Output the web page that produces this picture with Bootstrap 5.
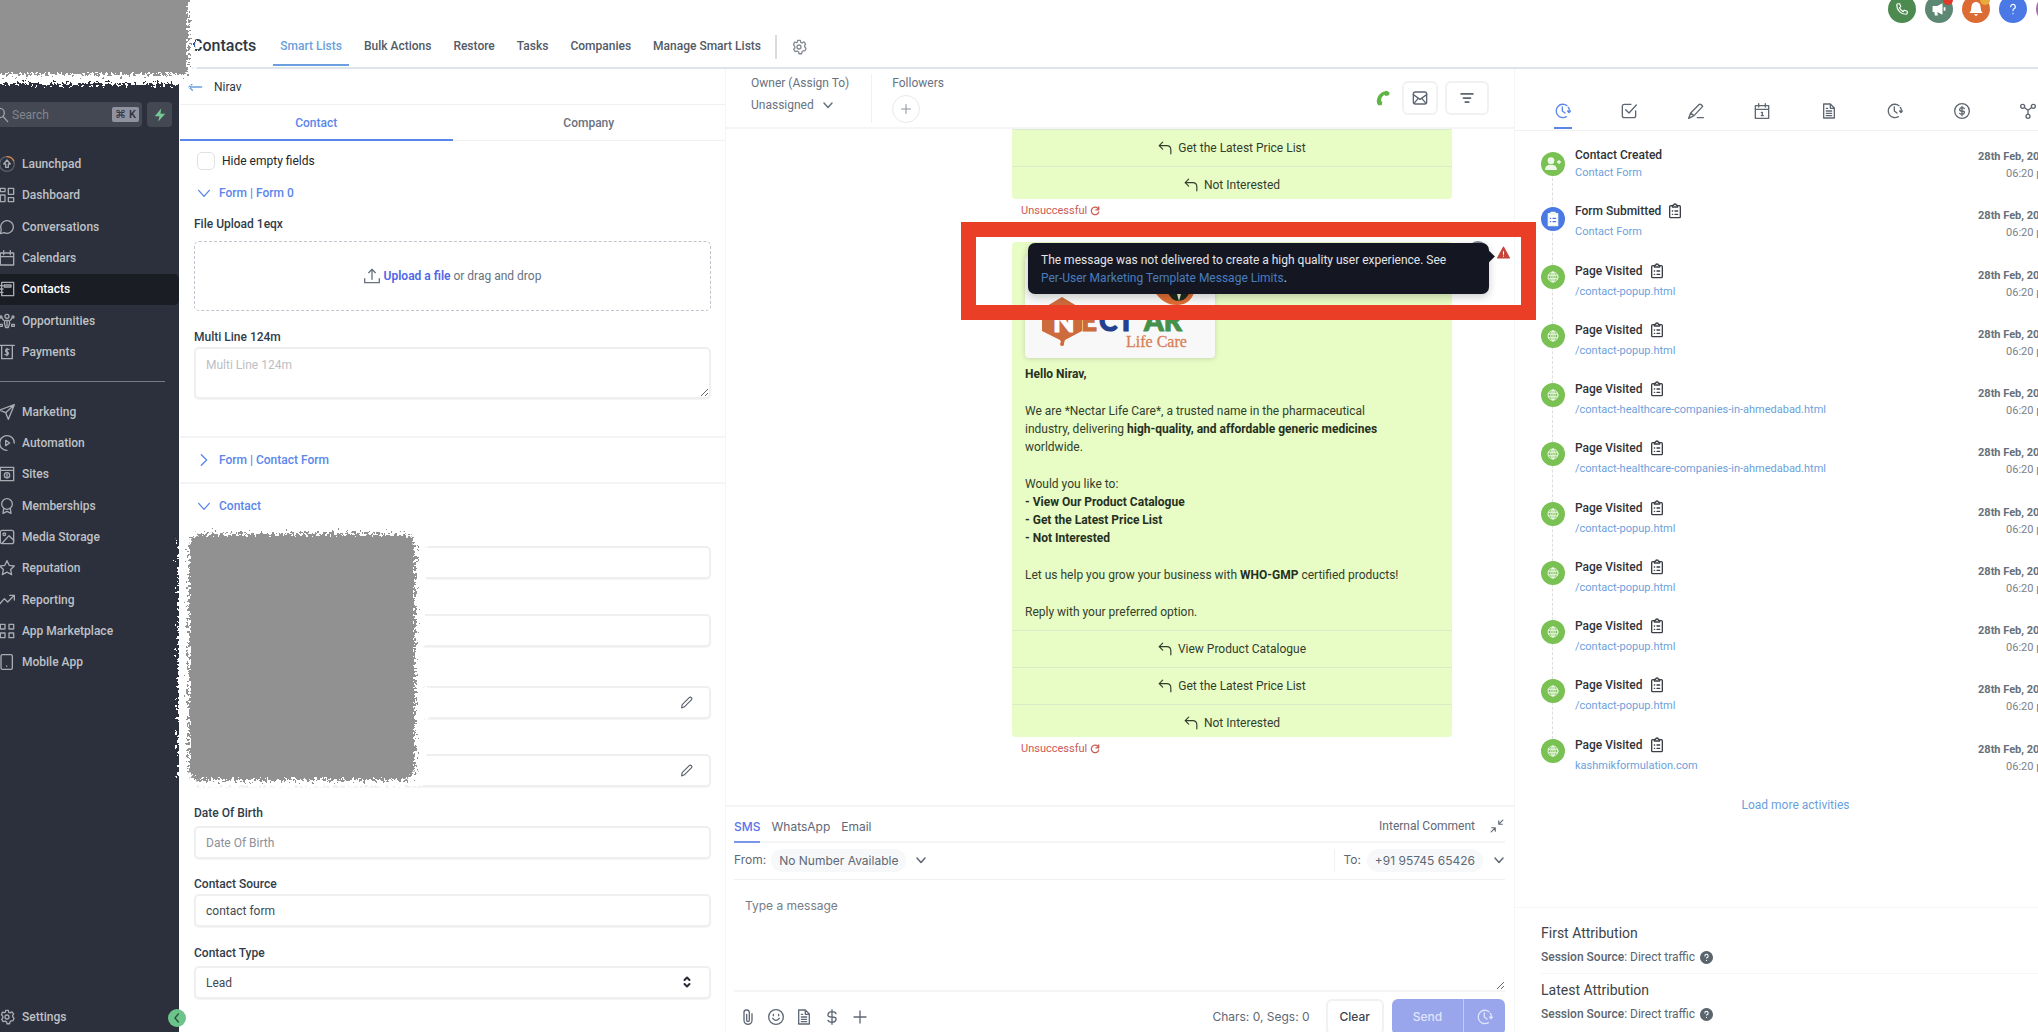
<!DOCTYPE html>
<html lang="en">
<head>
<meta charset="utf-8">
<meta name="viewport" content="width=device-width, initial-scale=1">
<title>Contacts</title>
<link href="https://cdn.jsdelivr.net/npm/bootstrap@5.3.0/dist/css/bootstrap.min.css" rel="stylesheet">
<style>
:root{--blue:#5a86ec;--sky:#6c9fdd;--ink:#2e3742;--muted:#68727f;--line:#f0f1f3;--lime:#e8fcc5;--alert:#ea3f26}
body{font-family:Roboto,"Liberation Sans",sans-serif;font-size:12px;line-height:18px;color:var(--ink);background:#fff;overflow:hidden}
a{text-decoration:none;color:inherit}
button{font:inherit;color:inherit;background:none;border:0;padding:0}
svg.ic{width:16px;height:16px;fill:none;stroke:currentColor;stroke-width:2;stroke-linecap:round;stroke-linejoin:round;flex:none}
svg.fillic{fill:currentColor;stroke:none}
svg.i12{width:12px;height:12px;stroke-width:3}
svg.i14{width:14px;height:14px}
.inter{font-family:Inter,"Liberation Sans",sans-serif}
.roboto{font-family:Roboto,"Liberation Sans",sans-serif}
.semi{font-weight:500}
/* side bar */
.side{width:179px;flex:none;background:#2b303c;color:#bfc1c6;padding-top:102px}
.searchbar{height:25px;margin:0 7px 21px 0;gap:5px}
.searchbox{background:#434853;border-radius:0 4px 4px 0;padding-right:3px}
.searchbox svg{margin-left:-7px;color:#a3a5ac}
.searchbox input{background:none;border:0;outline:0;color:#fff;padding:0 0 0 3px;width:10px}
.searchbox input::placeholder{color:#83868f}
.keys{background:#9092a0;color:#2b303c;border-radius:2px;padding:0 3px;font-size:11px;line-height:15px;white-space:nowrap;font-weight:500}
.bolt{width:25px;background:#434853;border-radius:4px;color:#74c893}
.menu1{height:220px;display:grid;grid-auto-rows:1fr}
.menu2{height:282px;display:grid;grid-auto-rows:1fr}
.side a{display:flex;align-items:center;gap:7px;font-weight:500;border-radius:0 5px 5px 0}
.side a svg{margin-left:-1px;color:#a9abb2}
.side a.on{background:#1a1d24;color:#fff}
.side hr{margin:13px 14px 14px 0;border-color:#8b8e95;opacity:.8}
.setlink{margin-bottom:6px}
.collapser{position:absolute;right:-7px;bottom:5px;width:18px;height:18px;background:#6dc48b;color:#20543a;z-index:3}
/* header */
.mainarea{min-width:0;margin-left:1px}
.topbar{height:69px;border-bottom:2px solid #dfe4e9;padding:0 0 1px 12px}
.topbar h1{font-size:16px;font-weight:500;line-height:18px;margin:0 17px 11px 0}
.topbar nav{gap:8px}
.topbar nav a{padding:2px 7px 0;line-height:36px;border-bottom:2px solid transparent;font-weight:500;color:#525a66}
.topbar nav a.on{color:var(--sky);border-color:var(--sky)}
.gearbox{border-left:2px solid #d8dbdf;margin:0 0 7px 7px;padding:4px 0 4px 14px;color:#868b91}
.rounds{gap:9px;margin:-5px -26px 0 0}
.rounds button{width:28px;height:28px;color:#fff;position:relative;flex:none}
.r-call{background:#4c8a50}.r-news{background:#5c8773}.r-bell{background:#dc6c34}.r-help{background:#4a78e4}.r-me{background:#a06ba8}
.dotmark{position:absolute;right:0;top:0;width:10px;height:10px;background:#e03a2c}
.dotmark.amber{background:#e8ac3c}
/* columns */
.board{display:grid;grid-template-columns:546fr 789fr 539fr;grid-template-rows:minmax(0,1fr);width:calc(100% + 16px)}
.pane{border-right:1px solid #f4f5f6;min-width:0}
.namebar{height:36px;border-bottom:1px solid var(--line);padding:0 7px;gap:11px}
.namebar svg{color:var(--sky)}
.twotabs a{line-height:36px;height:36px;border-bottom:1px solid var(--line);color:var(--muted);font-weight:500}
.twotabs a.on{color:var(--blue);border-bottom:2px solid var(--blue)}
.body1{padding:0 14px}
.hiderow{gap:7px;padding:11px 3px 0}
.body1 .form-check-input{width:18px;height:18px;margin:0;border:1px solid #dfe1e5;border-radius:5px}
.foldbtn{color:var(--blue);font-weight:500;gap:7px;padding-left:2px}
.fold0{margin:14px 0}
.foldmid{height:44px}
.fieldname{font-weight:500;line-height:16px;display:block;color:#303c49}
.dropzone{border:1px dashed #bfc3cb;border-radius:5px;height:70px;margin:9px 0 18px;color:var(--muted);width:100%}
.dropzone b{color:#4f66e8;font-weight:600}
.body1 .form-control,.body1 .form-select{font-size:12px;line-height:18px;border:2px solid #eeeff1;border-radius:5px;padding:5px 10px;height:33px;color:#424a54;box-shadow:0 1px 1px #f3f4f5}
.body1 .form-control::placeholder{color:#8b9099}
.body1 textarea.form-control{height:52px;padding-top:7px;margin-top:2px}
.body1 textarea.form-control::placeholder{color:#bcc0c5}
.body1 .form-select{background-image:none}
.rule{border-top:2px solid #f3f4f5;margin:0 -14px}
.rule1{margin-top:37px}
.fieldbox{position:relative}
.fieldbox svg{position:absolute;right:18px;top:10px;width:13px;height:13px;color:#555c66}
.fieldbox svg.caret{width:12px;height:12px;color:#262b35;stroke-width:4}
.hiddenset{display:grid;row-gap:35px;padding:18px 0}
.third{margin-top:4px}
.fl1{margin-bottom:5px}
.fl2{margin:17px 0 2px}
#src{margin-bottom:18px}
/* conversation */
.convhead{height:60px;border-bottom:2px solid #f4f5f6;padding:0 25px 0 25px;color:var(--muted)}
.owner{padding:5px 22px 0 0}
.convhead .sep{border-left:1px solid var(--line);margin:5px 0 4px;padding-left:20px}
.plus{width:28px;height:28px;border:1px solid #e8e9ec;color:#8c929b;margin-top:3px}
.plus svg.i12{stroke-width:2}
.convtools{gap:7px}
.callbtn{color:#5eb545}
.sqbtn{border:2px solid #f0f1f3;border-radius:6px;height:34px;color:#5d6673}
.filterbtn{padding:0 13px}
.msgcol{width:440px;margin-right:62px}
.msg2{margin-top:23px}
.bubble{background:var(--lime);border-radius:4px;color:#33402c}
.reply{display:flex;width:100%;justify-content:center;align-items:center;gap:6px;border-top:1px solid #dcebca;padding:10px 0;line-height:16px;color:#333d2e}
.reply svg.ic{width:14px;height:14px}
.reply:last-child{padding-bottom:6px}
.failed{color:#cb5a52;font-size:11px;line-height:16px;margin:4px 0 0 9px;gap:3px}
.failed svg.ic{width:10px;height:10px;stroke-width:3}
.bubble p{margin:0 0 19px}
.bubble strong{font-weight:700;color:#26301f}
.bubbletext{padding:14px 12px 9px 13px}
.logocard{display:block;width:190px;height:102px;background:#f8f8f8;border-radius:4px;box-shadow:0 1px 5px #c9d8b0;margin-bottom:7px}
.tip{position:absolute;left:16px;top:1px;width:461px;background:#141722;color:#e3e4e8;border-radius:7px;padding:8px 13px 7px;z-index:4;box-shadow:0 3px 8px rgba(0,0,0,.2)}
.tip a{color:#4a7dbd}
.tip::after{content:"";position:absolute;right:-4px;top:9px;width:9px;height:9px;background:#141722;transform:rotate(45deg)}
.avatar{position:absolute;left:456px;top:-1px;width:20px;height:20px;background:#7d8791}
.warn{position:absolute;left:485px;top:4px;color:#c4453c;display:flex}
.warn svg.ic{width:13px;height:13px}
.frame{position:absolute;left:-51px;top:-20px;width:575px;height:98px;border:15px solid var(--alert);z-index:6;pointer-events:none}
/* composer */
.composer{border-top:2px solid #f3f4f5;margin-bottom:-3px;padding:0 9px 0 8px;color:#5f6875}
.comptabs{height:36px;border-bottom:2px solid #f3f4f5;gap:11px}
.comptabs a{line-height:39px;height:36px}
.comptabs a.on{color:#5a72ea;border-bottom:2px solid #7b95ee;font-weight:500}
.comptabs button{padding:3px 1px 0 4px}
.fromrow{height:37px;border-bottom:1px solid var(--line);padding-bottom:2px;gap:5px}
.tobox{border-left:1px solid var(--line);padding-left:8px;gap:6px}
.pill{background:#f6f8fa;border-radius:12px;padding:0 8px;line-height:23px}
.composer textarea{width:100%;height:112px;border:0;border-bottom:2px solid #f3f4f5;outline:0;padding:17px 11px;display:block;resize:vertical}
.composer textarea::placeholder{color:#767d88}
.tools{padding:7px 0 0 6px}
.toolset{gap:12px}
.clearbtn{border:2px solid #f0f1f3;border-radius:6px;padding:0 12px;height:36px;font-weight:500;color:#3d4550}
.sendbtn{background:#9aa6ec;color:#dfe4fb;height:36px;font-weight:500}
.sendw{width:71px}
.clockw{width:42px;padding-left:13px;border-left:1px solid #c3cbf5}
/* activity */
.acttabs{height:62px;border-bottom:1px solid var(--line);padding:0 14px 0 36px;color:#5f6770}
.acttabs a{width:24px;height:61px;display:flex;flex-direction:column;align-items:center;padding-top:34px}
.acttabs a.on{color:var(--blue)}
.acttabs a.on::after{content:"";width:18px;height:2px;background:var(--blue);margin-top:8px}
.acts{height:652px;display:grid;grid-auto-rows:1fr;list-style:none;margin:0;padding:0 2px 0 26px}
.acts li{display:flex;position:relative}
.acts li:not(:last-child)::before{content:"";position:absolute;left:11px;top:28px;bottom:-20px;border-left:1px dashed #dcdddf}
.acts i{width:24px;height:24px;border-radius:50%;background:#78c152;color:#eef8e9;display:flex;align-items:center;justify-content:center;margin:15px 10px 0 0;flex:none;position:relative}
.acts h2{font-size:12px;font-weight:500;line-height:20px;margin:11px 0 2px;display:flex;align-items:center;gap:6px;color:#2f3338}
.acts h2 svg{width:16px;height:16px;color:#3b3f45}
.acts a{color:var(--sky);font-size:11px;line-height:18px;display:block}
.acts li:first-child i{margin-top:21px}
.acts li:nth-child(2) i{margin-top:17px;background:#4a78e4}
.acts li:first-child h2{margin:14px 0 -1px}
.acts time{margin-left:auto;text-align:right;font-size:11px;line-height:17px;padding-top:17px;color:#7a828a;white-space:nowrap}
.acts time b{font-weight:700;display:block;color:#66707a}
.acts svg.gl{width:12px;height:12px}
.more{color:var(--sky);margin-top:13px;padding-left:22px}
.attrib{height:125px;border-top:1px solid #f5f6f7;padding:15px 0 0 26px;color:#5b656e}
.attrib h3{font-size:14px;line-height:20px;font-weight:400;margin:0 0 5px;color:#3d4349}
.attrib p{margin:0;line-height:18px;display:flex;align-items:center}
.attrib p svg.ic{width:13px;height:13px;margin-left:5px}
.attrib p+h3{border-top:1px solid #f5f6f7;margin-top:7px;padding-top:6px}
/* brushed-out patches */
.scribble{position:absolute;z-index:8;pointer-events:none}
.blot1{left:0;top:0}
.blot2{left:169px;top:517px}
</style>
<script src="https://cdn.jsdelivr.net/npm/bootstrap@5.3.0/dist/js/bootstrap.bundle.min.js"></script>
</head>
<body>
<svg width="0" height="0" class="position-absolute" aria-hidden="true">
<defs>
<filter id="rough" x="-10%" y="-10%" width="120%" height="120%"><feTurbulence type="fractalNoise" baseFrequency=".35" numOctaves="3" seed="4"/><feDisplacementMap in="SourceGraphic" scale="17" xChannelSelector="R" yChannelSelector="G"/></filter>
<symbol id="gear" viewBox="0 0 24 24"><path d="M10 2h4l.7 3 2 .9 2.700-1.500 2.500 3-1.600 2.500.6 2.100 1.600 2.100-1.600 3.600-3 .1-1.400 1.300-.5 3h-4l-.7-3-2-.9-3 .8-2.300-3.300 1.900-2.500-.3-2.300-1.900-2.400L5.300 4.600l3 1 1.200-.7z"/><circle cx="12" cy="12" r="3"/></symbol>
<symbol id="down" viewBox="0 0 24 24"><path d="M4 8l8 9 8-9"/></symbol>
<symbol id="clock" viewBox="0 0 24 24"><path d="M18 4A10 10 0 1 0 17 20.500M21.500 10a10 10 0 0 0-1.500-3.500M11 6v6l4 3"/><path d="M19 12h4l-2 2.500z" fill="currentColor"/></symbol>
<symbol id="doc" viewBox="0 0 24 24"><path d="M4 1.500h10l6 6v15H4zM14 2v6h6M8 12h8M8 15.500h8M8 19h8M8 8h2"/></symbol>
<symbol id="clip" viewBox="0 0 24 24"><path d="M8 4H5.500A1.500 1.500 0 0 0 4 5.500v15A1.500 1.500 0 0 0 5.500 22h13a1.500 1.500 0 0 0 1.500-1.500v-15A1.500 1.500 0 0 0 18.500 4H16M8 6h8V3.500h-2a2 2 0 0 0-4 0H8zM8 12h.5M8 17h.5M12 12h4M12 17h4"/></symbol>
<symbol id="globe" viewBox="0 0 24 24"><circle cx="12" cy="12" r="10"/><path d="M3 8.500h18M3 15.500h18M12 2v20M12 2C6 7 6 17 12 22M12 2c6 5 6 15 0 20"/></symbol>
<symbol id="reply" viewBox="0 0 24 24"><path d="M8 2L2 8l6 6M2 8h13q7 0 7 7v7"/></symbol>
<symbol id="pen" viewBox="0 0 24 24"><path d="M3 22l1-6L17 3q2-2 4 0t0 4L8 20z"/></symbol>
<symbol id="retry" viewBox="0 0 24 24"><path d="M19 6a9 9 0 1 0 2 8M21 2v7h-7"/></symbol>
<symbol id="bubbleic" viewBox="0 0 24 24"><path d="M2 22l1.500-6A9.500 9.500 0 1 1 8 20.500z"/></symbol>
<symbol id="cal" viewBox="0 0 24 24"><path d="M2 4.500h20v18H2zM2 10h20M7 1v6M17 1v6"/></symbol>
<symbol id="phone" viewBox="0 0 24 24"><path d="M3 5q0-2 2-2h3l2 5-2.500 2q2 4 6.500 6.500l2-2.500 5 2v3q0 2-2 2C10 21 3 14 3 5z"/></symbol>
<symbol id="qmark" viewBox="0 0 24 24"><path d="M8 8a4 4 0 1 1 5.500 3.700Q12 12.500 12 15M12 19.500v.5"/></symbol>
<symbol id="qdot" viewBox="0 0 24 24"><circle cx="12" cy="12" r="11" fill="currentColor"/><path d="M9 9q0-3 3-3t3 3-3 4M12 17v.5" stroke="#fff"/></symbol>
</defs></svg>

<div class="d-flex vh-100 position-relative overflow-hidden">
<aside class="side d-flex flex-column position-relative">
  <div class="searchbar d-flex">
    <label class="searchbox d-flex align-items-center flex-grow-1"><svg class="ic" viewBox="0 0 24 24"><circle cx="10" cy="9" r="7"/><path d="M15 14l7 8"/></svg><input class="flex-grow-1" type="text" placeholder="Search" aria-label="Search"><span class="keys">⌘ K</span></label>
    <button class="bolt d-flex align-items-center justify-content-center" aria-label="Quick actions"><svg class="ic fillic i14" viewBox="0 0 24 24"><path d="M14 1L3 14h8l-2 9 12-13h-8z"/></svg></button>
  </div>
  <nav class="menu1">
    <a href="#"><svg class="ic" viewBox="0 0 24 24"><circle cx="12" cy="12" r="11" opacity=".4"/><path d="M12 1a11 11 0 0 1 10 6" stroke="#d98343"/><path d="M12 6l-5 6h3v5h4v-5h3z"/></svg>Launchpad</a>
    <a href="#"><svg class="ic" viewBox="0 0 24 24"><path d="M2 2h7v5H2zM14 2h8v9h-8zM2 12h7v10H2zM14 16h8v6h-8z"/></svg>Dashboard</a>
    <a href="#"><svg class="ic"><use href="#bubbleic"/></svg>Conversations</a>
    <a href="#"><svg class="ic"><use href="#cal"/></svg>Calendars</a>
    <a href="#" class="on"><svg class="ic" viewBox="0 0 24 24"><path d="M4 2h18v20H4zM8 6h10v3H8zM1 7h5M1 12h5M1 17h5"/></svg>Contacts</a>
    <a href="#"><svg class="ic" viewBox="0 0 24 24"><circle cx="12" cy="5" r="3"/><path d="M9 11h6l1 4-2 7h-4l-2-7zM12 12v8"/><circle cx="3" cy="6" r="1.500"/><circle cx="21" cy="6" r="1.500"/><path d="M1 17h4v3H1zM19 17h4v3h-4zM5 8l2 3M19 8l-2 3"/></svg>Opportunities</a>
    <a href="#"><svg class="ic" viewBox="0 0 24 24"><path d="M1 2h22M4 2v20h16V2M15 8h-4q-2 2 0 4h2q2 2 0 4H9M12 6.500v11"/></svg>Payments</a>
  </nav>
  <hr>
  <nav class="menu2">
    <a href="#"><svg class="ic" viewBox="0 0 24 24"><path d="M23 1L1 9l9 4 4 10zM23 1L10 13"/></svg>Marketing</a>
    <a href="#"><svg class="ic" viewBox="0 0 24 24"><path d="M12 23A11 11 0 1 1 23 12M10 8l6 4-6 4z"/></svg>Automation</a>
    <a href="#"><svg class="ic" viewBox="0 0 24 24"><path d="M2 2h20v20H2zM2 6.500h20"/><circle cx="12" cy="14" r="4"/><path d="M12 12v4"/></svg>Sites</a>
    <a href="#"><svg class="ic" viewBox="0 0 24 24"><circle cx="12" cy="9" r="8"/><path d="M7 16l-1 7 6-3 6 3-1-7"/></svg>Memberships</a>
    <a href="#"><svg class="ic" viewBox="0 0 24 24"><rect x="2" y="2" width="20" height="20" rx="3"/><circle cx="8" cy="8" r="2"/><path d="M5 21L15 10l7 7"/></svg>Media Storage</a>
    <a href="#"><svg class="ic" viewBox="0 0 24 24"><path d="M12 1l3.300 7 7.700 1-5.600 5.300L19 22l-7-3.800L5 22l1.600-7.700L1 9l7.700-1z"/></svg>Reputation</a>
    <a href="#"><svg class="ic" viewBox="0 0 24 24"><path d="M1 18l7-8 5 5L23 5M16 5h7v7"/></svg>Reporting</a>
    <a href="#"><svg class="ic" viewBox="0 0 24 24"><path d="M2 2h7v7H2zM15 2h7v7h-7zM2 15h7v7H2zM15 15h7v7h-7z"/></svg>App Marketplace</a>
    <a href="#"><svg class="ic" viewBox="0 0 24 24"><rect x="3" y="1" width="17" height="22" rx="2"/><path d="M11.500 18v.5"/></svg>Mobile App</a>
  </nav>
  <a href="#" class="mt-auto setlink"><svg class="ic"><use href="#gear"/></svg>Settings</a>
  <button class="collapser rounded-circle d-flex align-items-center justify-content-center" aria-label="Collapse"><svg class="ic" viewBox="0 0 24 24"><path d="M14 6l-5 6 5 6"/></svg></button>
</aside>

<main class="mainarea d-flex flex-column flex-grow-1">
  <header class="topbar d-flex align-items-end">
    <h1>Contacts</h1>
    <nav class="d-flex"><a href="#" class="on">Smart Lists</a><a href="#">Bulk Actions</a><a href="#">Restore</a><a href="#">Tasks</a><a href="#">Companies</a><a href="#">Manage Smart Lists</a></nav>
    <div class="gearbox d-flex align-items-center"><button class="d-flex" aria-label="Settings"><svg class="ic"><use href="#gear"/></svg></button></div>
    <div class="rounds d-flex ms-auto align-self-start">
      <button class="r-call rounded-circle d-flex align-items-center justify-content-center" aria-label="Call"><svg class="ic i14"><use href="#phone"/></svg></button>
      <button class="r-news rounded-circle d-flex align-items-center justify-content-center" aria-label="News"><svg class="ic fillic i14" viewBox="0 0 24 24"><path d="M1 7h8l9-5v20l-9-5H9l1 6H5l-1-6H1zM20 9h3v6h-3z"/></svg><span class="dotmark rounded-circle"></span></button>
      <button class="r-bell rounded-circle d-flex align-items-center justify-content-center" aria-label="Alerts"><svg class="ic fillic" viewBox="0 0 24 24"><path d="M12 1q7 1 7 9 0 5 3 8H2q3-3 3-8 0-8 7-9zM9 20h6q-3 5-6 0z"/></svg><span class="dotmark amber rounded-circle"></span></button>
      <button class="r-help rounded-circle d-flex align-items-center justify-content-center" aria-label="Help"><svg class="ic i14"><use href="#qmark"/></svg></button>
      <button class="r-me rounded-circle" aria-label="Profile"></button>
    </div>
  </header>

  <div class="board flex-grow-1">
    <section class="pane">
      <div class="namebar d-flex align-items-center"><a href="#" aria-label="Back" class="d-flex"><svg class="ic" viewBox="0 0 24 24"><path d="M22 12H3M8 7l-5 5 5 5"/></svg></a><span>Nirav</span></div>
      <div class="twotabs d-flex text-center"><a href="#" class="on w-50">Contact</a><a href="#" class="w-50">Company</a></div>
      <div class="body1">
        <label class="hiderow d-flex align-items-center"><input class="form-check-input" type="checkbox"><span class="text-dark">Hide empty fields</span></label>
        <button class="foldbtn fold0 d-flex align-items-center"><svg class="ic"><use href="#down"/></svg>Form | Form 0</button>
        <span class="fieldname" id="fu">File Upload 1eqx</span>
        <button class="dropzone d-flex align-items-center justify-content-center" aria-labelledby="fu"><svg class="ic me-1" viewBox="0 0 24 24"><path d="M1 16v6h22v-6M12 17V2M7 7l5-5 5 5"/></svg><b>Upload a file</b>&nbsp;or drag and drop</button>
        <label class="fieldname" for="ml">Multi Line 124m</label>
        <textarea class="form-control" id="ml" placeholder="Multi Line 124m"></textarea>
        <div class="rule rule1"></div>
        <button class="foldbtn d-flex align-items-center foldmid"><svg class="ic" viewBox="0 0 24 24"><path d="M8 4l8 8-8 8"/></svg>Form | Contact Form</button>
        <div class="rule"></div>
        <button class="foldbtn d-flex align-items-center foldmid"><svg class="ic"><use href="#down"/></svg>Contact</button>
        <div class="hiddenset">
          <input class="form-control" aria-label="First Name"><input class="form-control" aria-label="Last Name">
          <div class="fieldbox third"><input class="form-control" aria-label="Email"><svg class="ic"><use href="#pen"/></svg></div>
          <div class="fieldbox"><input class="form-control" aria-label="Phone"><svg class="ic"><use href="#pen"/></svg></div>
        </div>
        <label class="fieldname fl1" for="dob">Date Of Birth</label>
        <input class="form-control" id="dob" placeholder="Date Of Birth">
        <label class="fieldname fl2" for="src">Contact Source</label>
        <input class="form-control" id="src" value="contact form">
        <label class="fieldname fl1" for="typ">Contact Type</label>
        <div class="fieldbox"><select class="form-select" id="typ"><option>Lead</option></select><svg class="ic caret" viewBox="0 0 24 24"><path d="M7 8l5-5 5 5M7 16l5 5 5-5"/></svg></div>
      </div>
    </section>

    <section class="pane d-flex flex-column">
      <div class="convhead d-flex">
        <div class="owner"><div>Owner (Assign To)</div><button class="d-flex align-items-center gap-2 mt-1">Unassigned <svg class="ic i12"><use href="#down"/></svg></button></div>
        <div class="sep"><div>Followers</div><button class="plus rounded-circle d-flex align-items-center justify-content-center" aria-label="Add follower"><svg class="ic i12" viewBox="0 0 24 24"><path d="M12 3v18M3 12h18"/></svg></button></div>
        <div class="convtools ms-auto d-flex align-items-center">
          <button class="callbtn d-flex me-1" aria-label="Call"><svg class="ic fillic" viewBox="0 0 24 24"><path d="M5 23q-4-4-1-12Q8 2 18 1l4 3-1 4-5 1-2-2q-5 3-5 9l2 2-1 5z"/></svg></button>
          <button class="sqbtn d-flex align-items-center px-2" aria-label="Mail"><svg class="ic" viewBox="0 0 24 24"><rect x="2" y="3" width="20" height="18" rx="3"/><path d="M2 7l10 7 10-7M3 20l6-7M21 20l-6-7"/></svg></button>
          <button class="sqbtn filterbtn d-flex align-items-center" aria-label="Filter"><svg class="ic i14" viewBox="0 0 24 24"><path stroke-width="3" d="M2 5h20M6 12h12M9 19h6"/></svg></button>
        </div>
      </div>
      <div class="flex-grow-1 d-flex flex-column align-items-end">
        <div class="msgcol">
          <div class="bubble"><button class="reply"><svg class="ic"><use href="#reply"/></svg>Get the Latest Price List</button><button class="reply"><svg class="ic"><use href="#reply"/></svg>Not Interested</button></div>
          <div class="failed d-flex align-items-center">Unsuccessful <svg class="ic"><use href="#retry"/></svg></div>
        </div>
        <div class="msgcol position-relative msg2">
          <div class="bubble">
            <div class="bubbletext">
              <svg class="logocard" viewBox="0 0 190 102" role="img" aria-label="Nectar Life Care">
                <path d="M37 41L57 53V75L40 84L38 90L35 84L17 75V53Z" fill="#cd6b3c"/><circle cx="37" cy="88" r="2" fill="#cd6b3c"/>
                <path d="M129 35q10 15 24 14t17-16q-18-8-41 2z" fill="#dc6c34"/><path d="M142 35q4 10 12 10t12-12z" fill="#1c2a1c"/><path d="M152 38h4l-2 7z" fill="#e8f2d8"/>
                <g font-family="Lato,Roboto,sans-serif" font-weight="900" font-size="28" stroke-width="1"><text x="28" y="76" fill="#fff" stroke="#fff">N</text><text x="56" y="75" fill="#cd6b3c" stroke="#cd6b3c">E</text><text x="74" y="75" fill="#233f8f" stroke="#233f8f">CT</text><text x="119" y="75" fill="#45904a" stroke="#45904a">AR</text></g>
                <text x="101" y="91" font-family="Liberation Serif,serif" font-size="16" fill="#d98056" stroke="#d98056" stroke-width=".3">Life Care</text>
              </svg>
              <p><strong>Hello Nirav,</strong></p>
              <p>We are *Nectar Life Care*, a trusted name in the pharmaceutical<br>industry, delivering <strong>high-quality, and affordable generic medicines</strong><br>worldwide.</p>
              <p>Would you like to:<br><strong>- View Our Product Catalogue</strong><br><strong>- Get the Latest Price List</strong><br><strong>- Not Interested</strong></p>
              <p>Let us help you grow your business with <strong>WHO-GMP</strong> certified products!</p>
              <p class="mb-0">Reply with your preferred option.</p>
            </div>
            <button class="reply"><svg class="ic"><use href="#reply"/></svg>View Product Catalogue</button><button class="reply"><svg class="ic"><use href="#reply"/></svg>Get the Latest Price List</button><button class="reply"><svg class="ic"><use href="#reply"/></svg>Not Interested</button>
          </div>
          <div class="failed d-flex align-items-center">Unsuccessful <svg class="ic"><use href="#retry"/></svg></div>
          <span class="avatar rounded-circle"></span>
          <div class="tip" role="tooltip">The message was not delivered to create a high quality user experience. See<br><a href="#">Per-User Marketing Template Message Limits</a>.</div>
          <span class="warn"><svg class="ic" viewBox="0 0 24 24"><path d="M12 2L1 22h22z" fill="currentColor"/><path d="M12 10v5M12 18.500v.5" stroke="#fff"/></svg></span>
          <div class="frame"></div>
        </div>
      </div>
      <div class="composer inter">
        <div class="comptabs d-flex"><a href="#" class="on">SMS</a><a href="#">WhatsApp</a><a href="#">Email</a><a href="#" class="ms-auto roboto">Internal Comment</a><button class="d-flex align-items-center" aria-label="Shrink"><svg class="ic i14" viewBox="0 0 24 24"><path d="M22 2l-6 6M15 3v6h6M2 22l6-6M3 15h6v6"/></svg></button></div>
        <div class="fromrow d-flex align-items-center"><span>From:</span><button class="pill">No Number Available</button><svg class="ic i12 ms-1"><use href="#down"/></svg>
          <div class="tobox ms-auto d-flex align-items-center"><span>To:</span><button class="pill">+91 95745 65426</button><svg class="ic i12 ms-1"><use href="#down"/></svg></div></div>
        <textarea placeholder="Type a message" aria-label="Message"></textarea>
        <div class="tools d-flex align-items-center">
          <div class="d-flex toolset"><svg class="ic" viewBox="0 0 24 24"><path d="M18 7v10a6 6 0 0 1-12 0V6a4 4 0 0 1 8-1v12a2 2 0 0 1-4 0V8"/></svg><svg class="ic" viewBox="0 0 24 24"><circle cx="12" cy="12" r="11"/><path d="M8 8v2M16 8v2M7 14q5 6 10 0"/></svg><svg class="ic"><use href="#doc"/></svg><svg class="ic" viewBox="0 0 24 24"><path d="M18 7q-1-3-6-3T6 8t6 4 6 4-6 4-6-3M12 1v22"/></svg><svg class="ic" viewBox="0 0 24 24"><path d="M12 3v18M3 12h18"/></svg></div>
          <span class="ms-auto me-3">Chars: 0, Segs: 0</span>
          <button class="clearbtn me-2">Clear</button>
          <button class="sendbtn sendw rounded-start">Send</button><button class="sendbtn clockw rounded-end d-flex align-items-center" aria-label="Schedule"><svg class="ic"><use href="#clock"/></svg></button>
        </div>
      </div>
    </section>

    <section class="d-flex flex-column">
      <nav class="acttabs d-flex justify-content-between">
        <a href="#" class="on" aria-label="Activity"><svg class="ic"><use href="#clock"/></svg></a>
        <a href="#" aria-label="Tasks"><svg class="ic" viewBox="0 0 24 24"><path d="M15 2H5Q2 2 2 5v14q0 3 3 3h14q3 0 3-3v-7M7 10l5 5L23 3"/></svg></a>
        <a href="#" aria-label="Notes"><svg class="ic" viewBox="0 0 24 24"><path d="M1 23l3-8L17 2q3-1 5 3L9 19zM4 15l5 4M14 22h9"/></svg></a>
        <a href="#" aria-label="Appointments"><svg class="ic" viewBox="0 0 24 24"><path d="M2 4h20v19H2zM2 9.500h20M7 1v5M17 1v5M11 14h1.500v5M11 19h3"/></svg></a>
        <a href="#" aria-label="Documents"><svg class="ic"><use href="#doc"/></svg></a>
        <a href="#" aria-label="History"><svg class="ic"><use href="#clock"/></svg></a>
        <a href="#" aria-label="Payments"><svg class="ic" viewBox="0 0 24 24"><circle cx="12" cy="12" r="11"/><path d="M15.500 8.500Q15 7 12 7T8.500 9.500 12 12t3.500 2.500T12 17t-3.500-1.500M12 5v14"/></svg></a>
        <a href="#" aria-label="Associations"><svg class="ic" viewBox="0 0 24 24"><circle cx="4" cy="5" r="3"/><circle cx="20" cy="5" r="3"/><circle cx="12" cy="20" r="3"/><path d="M7 7l5 4 5-4M12 11v6"/></svg></a>
      </nav>
      <ul class="acts">
        <li><i><svg class="ic fillic" viewBox="0 0 24 24"><circle cx="9" cy="7" r="5"/><path d="M0 21q0-8 9-8t9 8zM18 8h2V6h2v2h2v2h-2v2h-2v-2h-2z"/></svg></i><div><h2>Contact Created</h2><a href="#">Contact Form</a></div><time><b>28th Feb, 2025</b>06:20 pm</time></li>
        <li><i><svg class="ic" viewBox="0 0 24 24"><path d="M5 4h14v18H5zM9 2h6v3H9z" fill="#fff"/><path stroke="#4a78e4" d="M8 11h.5M8 16h.5M12 11h4M12 16h4"/></svg></i><div><h2>Form Submitted<svg class="ic"><use href="#clip"/></svg></h2><a href="#">Contact Form</a></div><time><b>28th Feb, 2025</b>06:20 pm</time></li>
        <li><i><svg class="ic gl"><use href="#globe"/></svg></i><div><h2>Page Visited<svg class="ic"><use href="#clip"/></svg></h2><a href="#">/contact-popup.html</a></div><time><b>28th Feb, 2025</b>06:20 pm</time></li>
        <li><i><svg class="ic gl"><use href="#globe"/></svg></i><div><h2>Page Visited<svg class="ic"><use href="#clip"/></svg></h2><a href="#">/contact-popup.html</a></div><time><b>28th Feb, 2025</b>06:20 pm</time></li>
        <li><i><svg class="ic gl"><use href="#globe"/></svg></i><div><h2>Page Visited<svg class="ic"><use href="#clip"/></svg></h2><a href="#">/contact-healthcare-companies-in-ahmedabad.html</a></div><time><b>28th Feb, 2025</b>06:20 pm</time></li>
        <li><i><svg class="ic gl"><use href="#globe"/></svg></i><div><h2>Page Visited<svg class="ic"><use href="#clip"/></svg></h2><a href="#">/contact-healthcare-companies-in-ahmedabad.html</a></div><time><b>28th Feb, 2025</b>06:20 pm</time></li>
        <li><i><svg class="ic gl"><use href="#globe"/></svg></i><div><h2>Page Visited<svg class="ic"><use href="#clip"/></svg></h2><a href="#">/contact-popup.html</a></div><time><b>28th Feb, 2025</b>06:20 pm</time></li>
        <li><i><svg class="ic gl"><use href="#globe"/></svg></i><div><h2>Page Visited<svg class="ic"><use href="#clip"/></svg></h2><a href="#">/contact-popup.html</a></div><time><b>28th Feb, 2025</b>06:20 pm</time></li>
        <li><i><svg class="ic gl"><use href="#globe"/></svg></i><div><h2>Page Visited<svg class="ic"><use href="#clip"/></svg></h2><a href="#">/contact-popup.html</a></div><time><b>28th Feb, 2025</b>06:20 pm</time></li>
        <li><i><svg class="ic gl"><use href="#globe"/></svg></i><div><h2>Page Visited<svg class="ic"><use href="#clip"/></svg></h2><a href="#">/contact-popup.html</a></div><time><b>28th Feb, 2025</b>06:20 pm</time></li>
        <li><i><svg class="ic gl"><use href="#globe"/></svg></i><div><h2>Page Visited<svg class="ic"><use href="#clip"/></svg></h2><a href="#">kashmikformulation.com</a></div><time><b>28th Feb, 2025</b>06:20 pm</time></li>
      </ul>
      <a href="#" class="more align-self-center">Load more activities</a>
      <div class="attrib mt-auto">
        <h3>First Attribution</h3><p><b class="semi">Session Source</b>: Direct traffic <svg class="ic"><use href="#qdot"/></svg></p>
        <h3>Latest Attribution</h3><p><b class="semi">Session Source</b>: Direct traffic <svg class="ic"><use href="#qdot"/></svg></p>
      </div>
    </section>
  </div>
</main>

<svg class="scribble blot1" width="210" height="100"><rect x="-30" y="-30" width="225" height="114" fill="#fff" filter="url(#rough)"/><rect x="-30" y="-30" width="218" height="104" fill="#919191" filter="url(#rough)"/><rect x="-1" y="-1" width="187" height="73" fill="#919191"/></svg>
<svg class="scribble blot2" width="270" height="280"><rect x="10" y="12" width="247" height="258" rx="12" fill="#fff" filter="url(#rough)"/><rect x="20" y="17" width="226" height="246" rx="12" fill="#919191" filter="url(#rough)"/><rect x="22" y="20" width="222" height="240" rx="10" fill="#919191"/></svg>
</div>
</body>
</html>
